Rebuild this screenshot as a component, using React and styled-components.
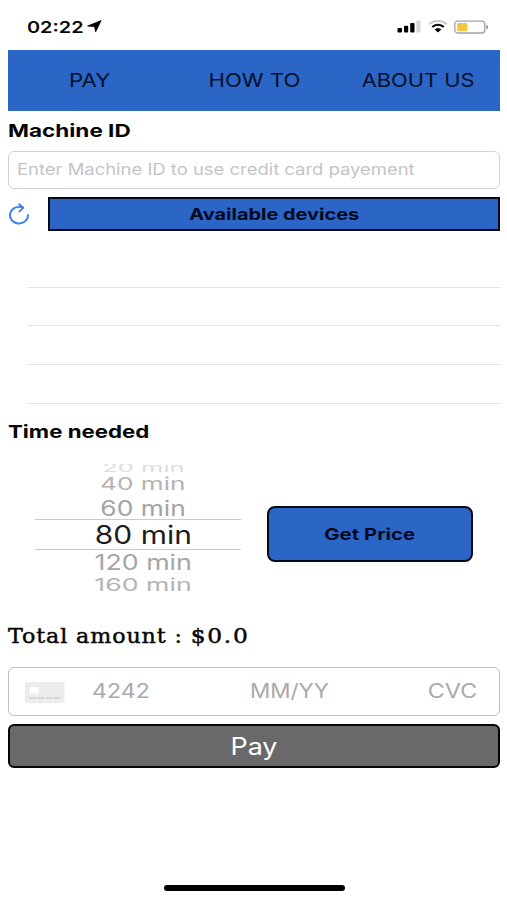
import React from "react";
import styled, { createGlobalStyle } from "styled-components";

const GlobalStyle = createGlobalStyle`
  * { box-sizing: border-box; }
  body {
    margin: 0;
    background: #fff;
    color: #050505;
    font-family: Inter, "Liberation Sans", sans-serif;
  }
  button { font-family: inherit; color: inherit; cursor: pointer; }
`;

const BLUE = "#2b65c6";

/* Text in extended width: the glyphs are widened around the given origin. */
const WideText = styled.span`
  display: inline-block;
  flex: none;
  white-space: pre;
  font-size: ${(p) => p.$size}px;
  font-weight: ${(p) => p.$weight || 400};
  line-height: 1;
  transform: scaleX(${(p) => p.$stretch || 1});
  transform-origin: ${(p) => p.$origin || "center"};
`;

const Screen = styled.main`
  display: flex;
  flex-direction: column;
  width: 507px;
  height: 900px;
  padding: 0 7px 0 8px;
  overflow: hidden;
`;

const StatusBar = styled.header`
  display: flex;
  align-items: center;
  height: 50px;
  padding: 3px 11px 0 18.5px;
`;

const Clock = styled.div`
  display: flex;
  align-items: center;
  gap: 15px;
  flex: 1;
`;

const StatusIcons = styled.div`
  display: flex;
  align-items: center;
  gap: 6px;
`;

const Tabs = styled.nav`
  display: grid;
  grid-template-columns: repeat(3, 1fr);
  height: 60.5px;
  background: ${BLUE};
`;

const Tab = styled.button`
  display: flex;
  align-items: center;
  justify-content: center;
  padding: 0;
  border: 0;
  background: none;
  color: #06112a;
`;

const Heading = styled.h2`
  display: flex;
  align-items: center;
  height: ${(p) => p.$height}px;
  margin: 0;
  padding-top: ${(p) => p.$drop || 0}px;
`;

const MachineField = styled.div`
  display: flex;
  align-items: center;
  height: 38px;
  padding: 0 0 2px 7.5px;
  border: 1.5px solid #d2d2d2;
  border-radius: 6px;
  color: #c4c4c6;
`;

const DevicesBar = styled.div`
  display: grid;
  grid-template-columns: 40px 1fr;
  align-items: center;
  height: 34px;
  margin-top: 8px;
`;

const IconButton = styled.button`
  display: flex;
  align-items: center;
  height: 100%;
  padding: 0;
  border: 0;
  background: none;
`;

const DevicesButton = styled.button`
  display: flex;
  align-items: center;
  justify-content: center;
  height: 34px;
  padding: 0;
  border: 2px solid #050a14;
  background: ${BLUE};
  color: #030a1c;
`;

const DeviceList = styled.ul`
  display: grid;
  grid-template-rows: 57px 38px 39px 39px;
  margin: 0 0 0 20px;
  padding: 0;
  list-style: none;
`;

const DeviceRow = styled.li`
  border-bottom: 1px solid #e4e4e4;
`;

const TimeSection = styled.section`
  display: flex;
  height: 146px;
`;

const Picker = styled.div`
  display: flex;
  flex-direction: column;
  width: 206px;
  margin: 5px 26px 0 27px;
  overflow: hidden;
`;

const PickerOption = styled.div`
  display: flex;
  align-items: center;
  justify-content: center;
  flex: none;
  height: ${(p) => p.$height}px;
  padding-left: 10px;
  overflow: hidden;
  color: ${(p) => p.$color};
  ${(p) =>
    p.$selected &&
    `border-top: 1px solid #cbcbcb; border-bottom: 1px solid #cbcbcb;`}
`;

const Squash = styled.span`
  display: flex;
  flex: none;
  transform: translateY(${(p) => p.$shift || 0}px) scaleY(${(p) => p.$squash || 1});
`;

const PriceButton = styled.button`
  display: flex;
  align-items: center;
  justify-content: center;
  width: 206px;
  height: 56px;
  margin-top: 47px;
  padding: 0;
  border: 2px solid #050a14;
  border-radius: 8px;
  background: ${BLUE};
  color: #030a1c;
`;

const Total = styled.p`
  display: flex;
  align-items: center;
  height: 62px;
  margin: 0;
  padding-top: 1px;
  font-family: "DejaVu Serif", serif;
  letter-spacing: 0.8px;
  -webkit-text-stroke: 0.45px #050505;
`;

const Amount = styled.span`
  font-size: 21px;
  letter-spacing: 1.5px;
`;

const CardField = styled.div`
  display: grid;
  grid-template-columns: 67px 158px 1fr auto;
  align-items: center;
  height: 49px;
  padding: 1px 22px 0 16px;
  border: 1.5px solid #bdbdbd;
  border-radius: 6px;
  color: #aaaaac;
`;

const PayButton = styled.button`
  display: flex;
  align-items: center;
  justify-content: center;
  height: 44px;
  margin-top: 8px;
  padding: 1px 0 0;
  border: 2px solid #060606;
  border-radius: 6px;
  background: #696969;
  color: #fff;
`;

const HomeIndicator = styled.div`
  width: 181px;
  height: 6px;
  margin: auto auto 9px 156px;
  border-radius: 3px;
  background: #000;
`;

const options = [
  { label: "20 min", height: 9, size: 17, stretch: 1.5, squash: 0.7, shift: -0.5, color: "#dedede" },
  { label: "40 min", height: 23, size: 17, stretch: 1.54, shift: 0, color: "#b4b4b4" },
  { label: "60 min", height: 23, size: 21, stretch: 1.255, shift: 0.5, color: "#a3a3a3" },
  { label: "80 min", height: 31, size: 25.5, stretch: 1.175, color: "#1c1c1c", selected: true },
  { label: "120 min", height: 23, size: 21, stretch: 1.275, shift: 0.5, color: "#a6a6a6" },
  { label: "160 min", height: 24, size: 17, stretch: 1.57, color: "#b4b4b4" },
];

const LocationIcon = () => (
  <svg width="15" height="13" viewBox="0 0 15 13">
    <path d="M14.2.5 8.6 12 7.6 6.8.5 6Z" fill="#000" stroke="#000" strokeWidth=".7" strokeLinejoin="round" />
  </svg>
);

const SignalIcon = () => (
  <svg width="25" height="13" viewBox="0 0 25 13">
    <rect x="0.5" y="8" width="4.5" height="4.5" rx="1" />
    <rect x="7" y="5.8" width="4.2" height="6.7" rx="1" />
    <rect x="13.2" y="3" width="4.3" height="9.5" rx="1" />
    <rect x="19.4" y="0.5" width="4" height="12" rx="1" fill="#d6d6d6" />
  </svg>
);

const WifiIcon = () => (
  <svg width="20" height="13" viewBox="0 0 20 13" fill="none">
    <path d="M1.2 4.2C6-.2 14-.2 18.8 4.2" stroke="#c9c9c9" strokeWidth="2" />
    <path d="M4.2 7C7.4 4 12.6 4 15.8 7" stroke="#000" strokeWidth="2.2" />
    <path d="M6.6 9.4C8.4 7.7 11.6 7.7 13.4 9.4L10 12.5Z" fill="#000" />
  </svg>
);

const BatteryIcon = () => (
  <svg width="35" height="14" viewBox="0 0 35 14">
    <rect x="0.8" y="1.2" width="30" height="11.8" rx="3" fill="#fff" stroke="#a2a2a2" strokeWidth="1.3" />
    <rect x="3.2" y="3" width="10.2" height="8.2" rx="1.2" fill="#f3c642" />
    <path d="M32.2 4.8c2.6.8 2.6 3.8 0 4.6Z" fill="#999" />
  </svg>
);

const RefreshIcon = () => (
  <svg width="22" height="22" viewBox="0 0 22 22" fill="none" stroke="#3f83f0" strokeWidth="1.9" strokeLinecap="round" strokeLinejoin="round">
    <path d="M20 12A9 8.3 0 1 1 14.6 4.6" />
    <path d="M11.2 1.2 15.2 4.8 11.4 8.6" />
  </svg>
);

const CardIcon = () => (
  <svg width="40" height="21" viewBox="0 0 40 21">
    <rect width="39.5" height="21" rx="1.8" fill="#ececec" />
    <rect x="4.5" y="5" width="9.5" height="6.5" rx="2" fill="#fff" />
    <path d="M4.5 16H35.5" stroke="#d6d6d6" strokeWidth="2" strokeDasharray="6.6 1.6" />
  </svg>
);

export default function App() {
  return (
    <>
      <GlobalStyle />
      <Screen>
        <StatusBar>
          <Clock>
            <WideText $size={16} $weight={600} $stretch={1.24} $origin="left">02:22</WideText>
            <LocationIcon />
          </Clock>
          <StatusIcons>
            <SignalIcon />
            <WifiIcon />
            <BatteryIcon />
          </StatusIcons>
        </StatusBar>

        <Tabs>
          <Tab><WideText $size={19} $stretch={1.17}>PAY</WideText></Tab>
          <Tab><WideText $size={19} $stretch={1.165}>HOW TO</WideText></Tab>
          <Tab><WideText $size={19} $stretch={1.15}>ABOUT US</WideText></Tab>
        </Tabs>

        <Heading $height={40.5}>
          <WideText $size={18} $weight={700} $stretch={1.25} $origin="left">Machine ID</WideText>
        </Heading>
        <MachineField>
          <WideText $size={16} $stretch={1.152} $origin="left">
            Enter Machine ID to use credit card payement
          </WideText>
        </MachineField>

        <DevicesBar>
          <IconButton aria-label="Refresh"><RefreshIcon /></IconButton>
          <DevicesButton>
            <WideText $size={16} $weight={700} $stretch={1.245}>Available devices</WideText>
          </DevicesButton>
        </DevicesBar>
        <DeviceList>
          <DeviceRow />
          <DeviceRow />
          <DeviceRow />
          <DeviceRow />
        </DeviceList>

        <Heading $height={55} $drop={1}>
          <WideText $size={18} $weight={700} $stretch={1.235} $origin="left">Time needed</WideText>
        </Heading>
        <TimeSection>
          <Picker>
            {options.map((o) => (
              <PickerOption key={o.label} $height={o.height} $color={o.color} $selected={o.selected}>
                <Squash $squash={o.squash} $shift={o.shift}>
                  <WideText $size={o.size} $stretch={o.stretch}>{o.label}</WideText>
                </Squash>
              </PickerOption>
            ))}
          </Picker>
          <PriceButton>
            <WideText $size={16} $weight={700} $stretch={1.27}>Get Price</WideText>
          </PriceButton>
        </TimeSection>

        <Total>
          <WideText $size={20} $stretch={1.11} $origin="left">
            Total amount : <Amount>$0.0</Amount>
          </WideText>
        </Total>

        <CardField>
          <CardIcon />
          <WideText $size={19.5} $stretch={1.19} $origin="left">4242</WideText>
          <WideText $size={19.5} $stretch={1.15} $origin="left">MM/YY</WideText>
          <WideText $size={19.5} $stretch={1.2} $origin="right">CVC</WideText>
        </CardField>
        <PayButton>
          <WideText $size={24} $stretch={1.12}>Pay</WideText>
        </PayButton>

        <HomeIndicator />
      </Screen>
    </>
  );
}
